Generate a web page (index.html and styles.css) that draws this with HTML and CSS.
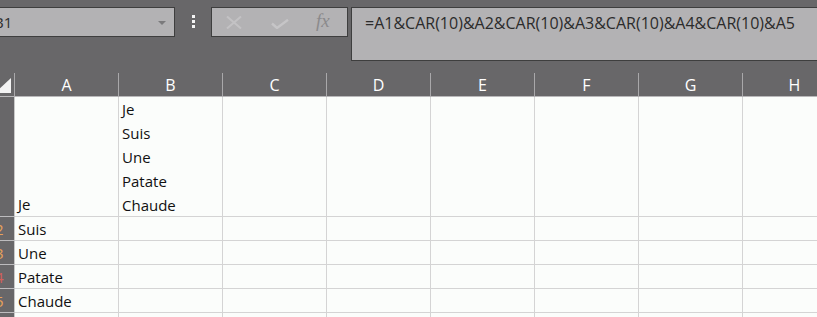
FILE: index.html
```html
<!DOCTYPE html>
<html lang="fr">

<head>
    <meta charset="UTF-8">
    <title>Feuille Excel - CAR(10)</title>
    <link rel="stylesheet" href="styles.css">
</head>

<body>
    <!-- Barre de formule -->
    <div class="formula-bar">
        <div class="name-box">
            <span class="name-text">B1</span>
            <span class="name-arrow"></span>
        </div>
        <div class="grip">
            <span></span><span></span><span></span>
        </div>
        <div class="buttons-box">
            <svg class="icon-cancel" width="16" height="13" viewBox="0 0 16 13">
                <path d="M1 0.5 L15 12.5 M15 0.5 L1 12.5" stroke="#c3c2c4" stroke-width="2" fill="none"/>
            </svg>
            <svg class="icon-enter" width="18" height="10" viewBox="0 0 18 10">
                <path d="M1 4.5 L6 9 L17 0.8" stroke="#c6c5c7" stroke-width="2.4" fill="none"/>
            </svg>
            <span class="icon-fx">fx</span>
        </div>
        <div class="formula-box">=A1&amp;CAR(10)&amp;A2&amp;CAR(10)&amp;A3&amp;CAR(10)&amp;A4&amp;CAR(10)&amp;A5</div>
    </div>

    <!-- Grille -->
    <div class="sheet">
        <div class="corner"><span class="corner-triangle"></span></div>
        <div class="col-head">A</div>
        <div class="col-head">B</div>
        <div class="col-head">C</div>
        <div class="col-head">D</div>
        <div class="col-head">E</div>
        <div class="col-head">F</div>
        <div class="col-head">G</div>
        <div class="col-head">H</div>

        <div class="row-head row-tall"></div>
        <div class="cell row-tall align-bottom">Je</div>
        <div class="cell row-tall">Je<br>Suis<br>Une<br>Patate<br>Chaude</div>
        <div class="cell row-tall"></div>
        <div class="cell row-tall"></div>
        <div class="cell row-tall"></div>
        <div class="cell row-tall"></div>
        <div class="cell row-tall"></div>
        <div class="cell row-tall"></div>

        <div class="row-head"><span class="row-num">2</span></div>
        <div class="cell">Suis</div>
        <div class="cell"></div><div class="cell"></div><div class="cell"></div>
        <div class="cell"></div><div class="cell"></div><div class="cell"></div><div class="cell"></div>

        <div class="row-head"><span class="row-num">3</span></div>
        <div class="cell">Une</div>
        <div class="cell"></div><div class="cell"></div><div class="cell"></div>
        <div class="cell"></div><div class="cell"></div><div class="cell"></div><div class="cell"></div>

        <div class="row-head"><span class="row-num red">4</span></div>
        <div class="cell">Patate</div>
        <div class="cell"></div><div class="cell"></div><div class="cell"></div>
        <div class="cell"></div><div class="cell"></div><div class="cell"></div><div class="cell"></div>

        <div class="row-head"><span class="row-num">5</span></div>
        <div class="cell">Chaude</div>
        <div class="cell"></div><div class="cell"></div><div class="cell"></div>
        <div class="cell"></div><div class="cell"></div><div class="cell"></div><div class="cell"></div>

        <div class="row-head last"></div>
        <div class="cell last"></div><div class="cell last"></div><div class="cell last"></div><div class="cell last"></div>
        <div class="cell last"></div><div class="cell last"></div><div class="cell last"></div><div class="cell last"></div>
    </div>
</body>

</html>
```

FILE: styles.css
```css
html, body {
    height: 317px;
    overflow: hidden;
}

body {
    margin: 0;
    background-color: #686769;
    font-family: "Open Sans", "Noto Sans", sans-serif;
}

/* Barre de formule */
.formula-bar {
    display: flex;
    align-items: flex-start;
    height: 73px;
    padding-top: 7px;
    box-sizing: border-box;
}

.name-box {
    position: relative;
    width: 175px;
    height: 30px;
    box-sizing: border-box;
    border: 1px solid #3e3e3e;
    border-left: none;
    background-color: #b3b2b4;
    overflow: hidden;
}

.name-text {
    display: block;
    margin-left: -6px;
    line-height: 28px;
    font-size: 15px;
    color: #2e2e2e;
}

.name-arrow {
    position: absolute;
    top: 13px;
    left: 158px;
    border-left: 4px solid transparent;
    border-right: 4px solid transparent;
    border-top: 4px solid #7b7a7c;
}

.grip {
    display: flex;
    flex-direction: column;
    gap: 2px;
    width: 3px;
    margin: 8px 16px 0 17px;
}

.grip span {
    display: block;
    width: 3px;
    height: 3px;
    background-color: #f4f4f4;
}

.buttons-box {
    display: flex;
    align-items: center;
    width: 137px;
    height: 30px;
    box-sizing: border-box;
    border: 1px solid #3e3e3e;
    background-color: #b3b2b4;
    padding-left: 14px;
}

.icon-cancel {
    margin-top: 1px;
}

.icon-enter {
    margin-left: 29px;
    margin-top: 4px;
}

.icon-fx {
    margin-left: 27px;
    margin-top: -2px;
    font-family: "Liberation Serif", "DejaVu Serif", serif;
    font-style: italic;
    font-size: 19px;
    color: #8b8a8c;
}

.formula-box {
    flex: 1;
    margin-left: 3px;
    height: 54px;
    box-sizing: border-box;
    border: 1px solid #3e3e3e;
    border-right: none;
    background-color: #b3b2b4;
    padding: 4px 0 0 13px;
    font-size: 16px;
    color: #2b2b2b;
    white-space: nowrap;
    overflow: hidden;
}

/* Grille */
.sheet {
    display: grid;
    grid-template-columns: 15px repeat(8, 104px);
    grid-template-rows: 24px 120px repeat(4, 24px) 4px;
}

.corner {
    position: relative;
    border-right: 1px solid #a9a8aa;
    border-bottom: 1px solid #b9b8ba;
}

.corner-triangle {
    position: absolute;
    left: -5px;
    top: 5px;
    width: 0;
    height: 0;
    border-left: 16px solid transparent;
    border-bottom: 15px solid #f3f3f3;
}

.col-head {
    border-right: 1px solid #a9a8aa;
    border-bottom: 1px solid #b9b8ba;
    color: #ffffff;
    font-size: 16px;
    line-height: 25px;
    text-align: center;
}

.row-head {
    border-right: 1px solid #c9c9c9;
    border-bottom: 1px solid #bdbcbe;
    overflow: hidden;
}

.row-num {
    display: block;
    margin-left: -5px;
    font-size: 15px;
    line-height: 24px;
    color: #e8a25a;
}

.row-num.red {
    color: #d2605a;
}

.cell {
    background-color: #fbfdfb;
    border-right: 1px solid #d4d4d4;
    border-bottom: 1px solid #d4d4d4;
    padding-left: 3px;
    font-size: 15px;
    line-height: 24px;
    color: #111111;
    white-space: nowrap;
}

.align-bottom {
    display: flex;
    align-items: flex-end;
}

.last {
    border-bottom: none;
}
```
